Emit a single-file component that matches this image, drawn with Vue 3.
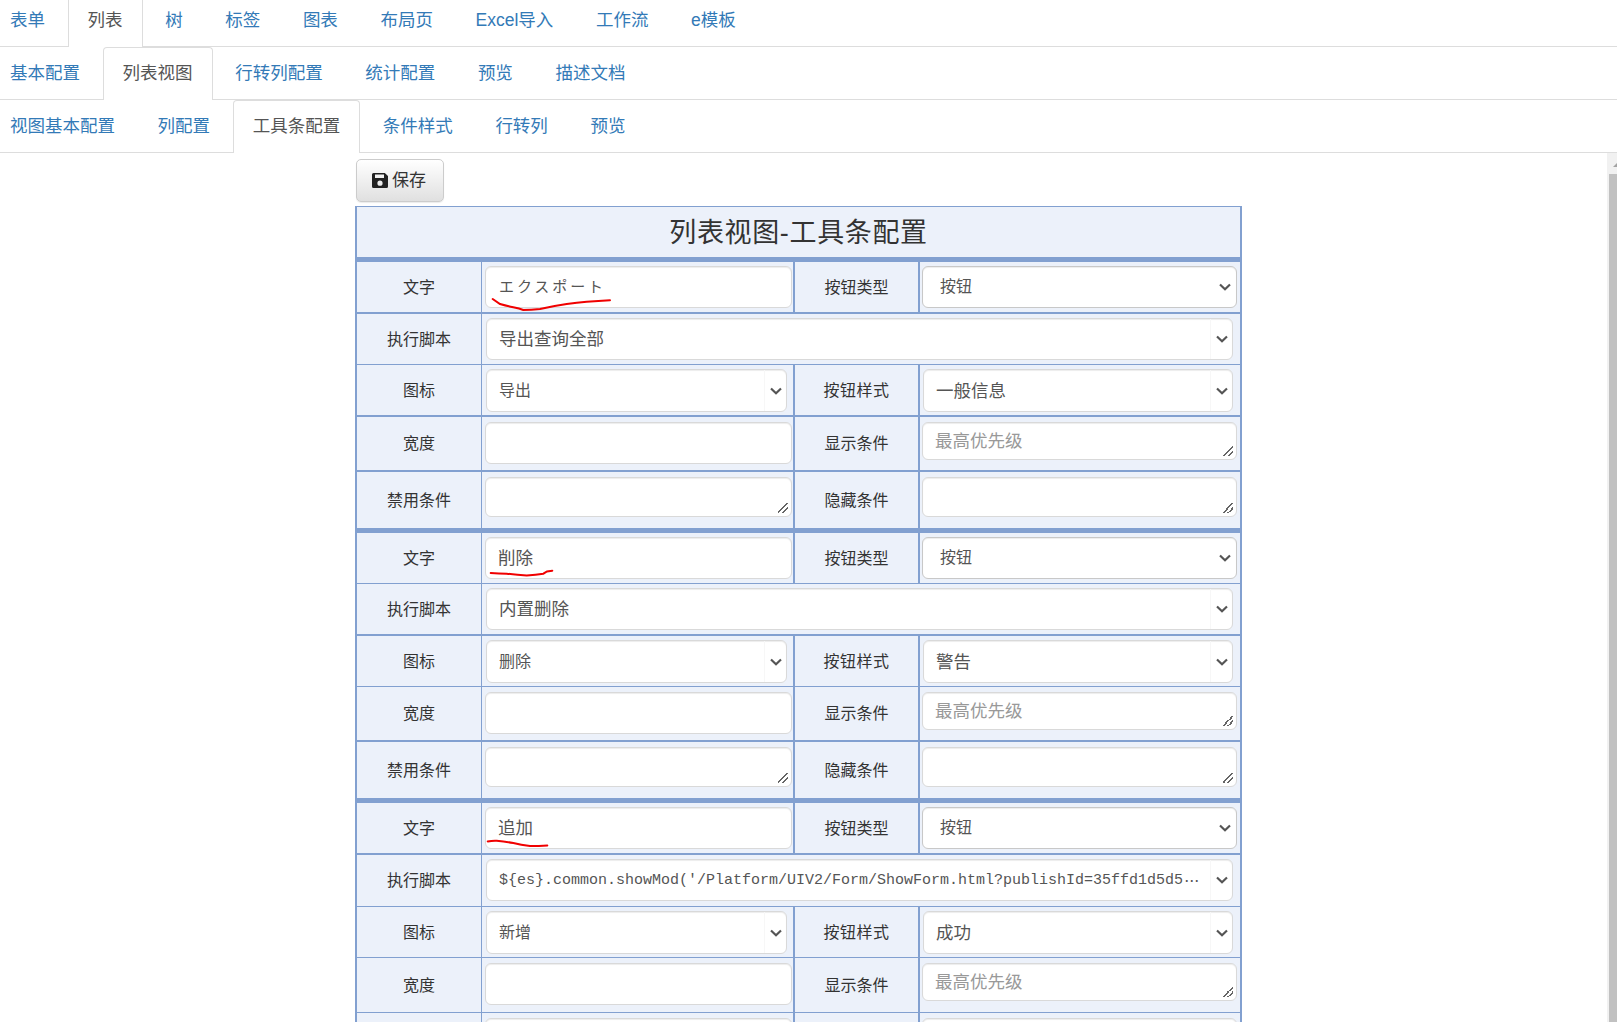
<script setup>
const navs = [
  { cls: 'first', items: ['表单', '列表', '树', '标签', '图表', '布局页', 'Excel导入', '工作流', 'e模板'], active: 1 },
  { cls: '', items: ['基本配置', '列表视图', '行转列配置', '统计配置', '预览', '描述文档'], active: 1 },
  { cls: '', items: ['视图基本配置', '列配置', '工具条配置', '条件样式', '行转列', '预览'], active: 2 }
]

const marks = {
  a: 'M7.7 33 L15 38 Q22 40 28.3 41.3 T38.3 44 Q46 44 55 43 Q68 40 81.7 38 Q92 36.5 101.7 35.7 L125 34.3',
  b: 'M5.7 36 Q14 36.5 21.7 36.7 Q32 38 41.7 38.4 Q51 38 58.3 36.7 L62 34.5 L67.3 33.7',
  c: 'M2.7 34.4 Q7 33.5 11.7 33.7 Q20 34.5 28.3 36 Q36 38 45 39 Q54 39 62.3 38.4'
}

const sections = [
  {
    text: 'エクスポート', textCls: 'kana', mark: 'a', script: '导出查询全部', icon: '导出', style: '一般信息',
    heights: [52, 51, 52, 55, 61], borders: ['b2', 'b1', 'b2', 'b2', 'b5'], last: false
  },
  {
    text: '削除', textCls: 'tight', mark: 'b', script: '内置删除', icon: '删除', style: '警告',
    heights: [51, 52, 51, 55, 61], borders: ['b1', 'b2', 'b1', 'b2', 'b5'], last: false
  },
  {
    text: '追加', textCls: 'tight', mark: 'c',
    longScript: '${es}.common.showMod(\'/Platform/UIV2/Form/ShowForm.html?publishId=35ffd1d5d5',
    icon: '新增', style: '成功',
    heights: [52, 52, 51, 55, 61], borders: ['b2', 'b1', 'b1', 'b1', 'b1'], last: true
  }
]
</script>

<template>
  <div class="page">
    <div
      v-for="(nav, n) in navs"
      :key="n"
      class="nav"
      :class="nav.cls"
    >
      <a
        v-for="(item, i) in nav.items"
        :key="item"
        class="tab"
        :class="{ active: i === nav.active }"
      >{{ item }}</a>
    </div>

    <div class="body">
      <main class="main">
        <button class="save" type="button">
          <svg class="disk" width="16" height="15" viewBox="0 0 16 15">
            <path
              fill="#222"
              fill-rule="evenodd"
              d="M1.5 0 H12.8 L16 3 V13.5 Q16 15 14.5 15 H1.5 Q0 15 0 13.5 V1.5 Q0 0 1.5 0 Z M3 1.5 V5 H12 V1.5 Z M8 7.6 A2.6 2.6 0 1 0 8 12.8 A2.6 2.6 0 1 0 8 7.6 Z"
            />
          </svg>
          <span class="save-text">保存</span>
        </button>

        <table class="grid">
          <colgroup>
            <col class="c1" />
            <col class="c2" />
            <col class="c3" />
            <col class="c4" />
          </colgroup>
          <tbody>
            <tr class="title-row">
              <td colspan="4" class="title">列表视图-工具条配置</td>
            </tr>
            <template v-for="(s, si) in sections" :key="si">
              <tr :class="s.borders[0]" :style="{ height: s.heights[0] + 'px' }">
                <th>文字</th>
                <td class="f pt4">
                  <div class="mark-wrap">
                    <input class="ctl text" :class="s.textCls" type="text" :value="s.text" />
                    <svg class="mark" width="130" height="48" viewBox="0 0 130 48">
                      <path :d="marks[s.mark]" fill="none" stroke="#f00000" stroke-width="2" stroke-linecap="round" />
                    </svg>
                  </div>
                </td>
                <th class="r">按钮类型</th>
                <td class="f pt4">
                  <div class="sel type">
                    <select class="ctl"><option>按钮</option></select>
                    <span class="arrow plain">
                      <svg width="12" height="8" viewBox="0 0 12 8"><path d="M1 1.5 L6 6.2 L11 1.5" fill="none" stroke="#555" stroke-width="2.2" /></svg>
                    </span>
                  </div>
                </td>
              </tr>
              <tr :class="s.borders[1]" :style="{ height: s.heights[1] + 'px' }">
                <th>执行脚本</th>
                <td colspan="3" class="f pt4 last-cell">
                  <div class="sel wide">
                    <div v-if="s.longScript" class="ctl long"><span>{{ s.longScript }}</span><span class="dots">⋯</span></div>
                    <select v-else class="ctl roomy"><option>{{ s.script }}</option></select>
                    <span class="arrow">
                      <svg width="12" height="8" viewBox="0 0 12 8"><path d="M1 1.5 L6 6.2 L11 1.5" fill="none" stroke="#555" stroke-width="2.2" /></svg>
                    </span>
                  </div>
                </td>
              </tr>
              <tr :class="s.borders[2]" :style="{ height: s.heights[2] + 'px' }">
                <th>图标</th>
                <td class="f pt4">
                  <div class="sel icon">
                    <select class="ctl"><option>{{ s.icon }}</option></select>
                    <span class="arrow">
                      <svg width="12" height="8" viewBox="0 0 12 8"><path d="M1 1.5 L6 6.2 L11 1.5" fill="none" stroke="#555" stroke-width="2.2" /></svg>
                    </span>
                  </div>
                </td>
                <th class="r spaced">按钮样式</th>
                <td class="f pt4">
                  <div class="sel btn-style">
                    <select class="ctl roomy"><option>{{ s.style }}</option></select>
                    <span class="arrow">
                      <svg width="12" height="8" viewBox="0 0 12 8"><path d="M1 1.5 L6 6.2 L11 1.5" fill="none" stroke="#555" stroke-width="2.2" /></svg>
                    </span>
                  </div>
                </td>
              </tr>
              <tr :class="s.borders[3]" :style="{ height: s.heights[3] + 'px' }">
                <th>宽度</th>
                <td class="f pt5"><input class="ctl text" type="text" /></td>
                <th class="r">显示条件</th>
                <td class="f pt5"><textarea class="ctl area right cond" placeholder="最高优先级"></textarea></td>
              </tr>
              <tr :class="s.borders[4]" :style="{ height: s.heights[4] + 'px' }">
                <th>{{ s.last ? '' : '禁用条件' }}</th>
                <td class="f pt5"><textarea class="ctl area left"></textarea></td>
                <th class="r">{{ s.last ? '' : '隐藏条件' }}</th>
                <td class="f pt5"><textarea class="ctl area right"></textarea></td>
              </tr>
            </template>
          </tbody>
        </table>
      </main>

      <div class="scrollbar">
        <span class="up"></span>
        <span class="thumb"></span>
      </div>
    </div>
  </div>
</template>

<style>
html,
body {
  margin: 0;
  height: 1022px;
  overflow: hidden;
  background: #fff;
}
</style>

<style scoped>
.page {
  width: 1617px;
  height: 1022px;
  overflow: hidden;
  display: flex;
  flex-direction: column;
  font-family: "Liberation Sans", "Noto Sans CJK SC", sans-serif;
  color: #333;
}

.nav {
  flex: none;
  height: 53px;
  box-sizing: border-box;
  display: flex;
  padding-left: 0;
  border-bottom: 1px solid #ddd;
}
.nav.first {
  margin-top: -6px;
}
.tab {
  box-sizing: border-box;
  height: 53px;
  padding: 0 19px;
  margin-right: 2.6px;
  border: 1px solid transparent;
  border-bottom: none;
  border-radius: 4px 4px 0 0;
  font-size: 17.5px;
  line-height: 51px;
  color: #337ab7;
  white-space: nowrap;
}
.tab:first-child {
  margin-left: -10px;
}
.tab.active {
  border-color: #ddd;
  background: #fff;
  color: #555;
}

.body {
  flex: 1;
  min-height: 0;
  display: flex;
}
.main {
  flex: 1;
  min-width: 0;
  overflow: hidden;
  padding: 6px 0 0 355px;
}
.scrollbar {
  flex: none;
  width: 10px;
  position: relative;
  background: #f1f1f1;
  overflow: hidden;
}
.up {
  position: absolute;
  left: 6px;
  top: 9px;
  width: 0;
  height: 0;
  border-left: 5px solid transparent;
  border-right: 5px solid transparent;
  border-bottom: 5px solid #a3a3a3;
}
.thumb {
  position: absolute;
  left: 2px;
  right: 0;
  top: 21px;
  bottom: 0;
  background: #c1c1c1;
}

.save {
  display: flex;
  align-items: center;
  gap: 4px;
  box-sizing: border-box;
  width: 88px;
  height: 43px;
  margin: 0 0 4px 1px;
  padding: 0 0 1px 15px;
  border: 1px solid #ccc;
  border-radius: 5px;
  background: linear-gradient(#fff, #e0e0e0);
  box-shadow: 0 1px 1px rgba(0, 0, 0, 0.08);
  font-family: inherit;
  font-size: 17px;
  color: #333;
}
.save-text {
  margin-bottom: 4px;
}
.disk {
  flex: none;
}

.grid {
  box-sizing: border-box;
  width: 887px;
  table-layout: fixed;
  border-collapse: separate;
  border-spacing: 0;
  border-top: 1px solid #82a0d0;
  border-left: 2px solid #82a0d0;
  border-right: 2px solid #82a0d0;
  background: #ecf1fa;
}
.c1,
.c3 {
  width: 125px;
}
.c2 {
  width: 313px;
}
.c4 {
  width: 320px;
}
.title-row {
  height: 55px;
}
.title {
  padding: 0 0 4px;
  border-bottom: 5px solid #82a0d0;
  text-align: center;
  font-size: 27px;
  letter-spacing: 0.65px;
  color: #333;
}
th,
td {
  box-sizing: border-box;
  padding: 0;
}
th {
  padding-bottom: 3px;
  font-weight: 400;
  font-size: 16px;
  color: #333;
  text-align: center;
  border-right: 1px solid #82a0d0;
  border-bottom: 1px solid #82a0d0;
}
th.r {
  border-right: 2px solid #82a0d0;
}
th.spaced {
  letter-spacing: 0.5px;
}
.f {
  vertical-align: top;
  border-bottom: 1px solid #82a0d0;
}
.f:not(:last-child) {
  border-right: 2px solid #82a0d0;
}
.pt4 {
  padding-top: 4px;
}
.pt5 {
  padding-top: 5px;
}
.b2 > th,
.b2 > td {
  border-bottom-width: 2px;
}
.b5 > th,
.b5 > td {
  border-bottom-width: 5px;
}

.ctl {
  box-sizing: border-box;
  display: block;
  border: 1px solid #d9d9d9;
  border-radius: 6px;
  background: #fff;
  box-shadow: inset 0 1px 1px rgba(0, 0, 0, 0.075);
  font-family: "Liberation Sans", "Noto Sans CJK SC", sans-serif;
  font-size: 16px;
  color: #555;
  outline: none;
}
.text {
  width: 307px;
  height: 42px;
  margin-left: 3px;
  padding: 0 13px 3px;
}
.text.tight {
  padding: 0 12px 3px;
  font-size: 17.5px;
}
.text.kana {
  font-family: "Noto Sans CJK JP", sans-serif;
  font-size: 15px;
  letter-spacing: 2.9px;
}
.mark-wrap {
  position: relative;
}
.mark {
  position: absolute;
  left: 3px;
  top: 0;
  overflow: visible;
  pointer-events: none;
}

.area {
  height: 40px;
  padding: 6px 12px 4px;
  font-size: 17.5px;
  line-height: 25px;
}
.area::placeholder {
  color: #999;
}
.area::-webkit-resizer {
  background: linear-gradient(
      135deg,
      transparent 0 45%,
      #666 45% 55%,
      transparent 55% 70%,
      #666 70% 80%,
      transparent 80%
    )
    no-repeat right 3px bottom 3px / 10px 10px;
}
.area.left {
  width: 307px;
  margin-left: 3px;
}
.area.right {
  width: 315px;
  margin-left: 2px;
}
.area.cond {
  height: 38px;
}

.sel {
  position: relative;
  height: 42px;
}
.sel select {
  appearance: none;
  width: 100%;
  height: 100%;
  padding: 0 24px 0 12px;
  border-radius: 6px;
}
.sel select.roomy {
  font-size: 17.5px;
}
.long {
  display: flex;
  align-items: center;
  height: 100%;
  padding-left: 12px;
  font-family: "Liberation Mono", "Noto Sans CJK SC", monospace;
  font-size: 15px;
  white-space: nowrap;
  overflow: hidden;
}
.dots {
  margin-left: 1px;
  font-family: "Noto Sans CJK SC", sans-serif;
}
.sel.type {
  width: 315px;
  margin-left: 2px;
}
.sel.type select {
  padding: 0 24px 2px 17px;
  border-color: #c8c8c8;
}
.sel.wide {
  width: 747px;
  margin-left: 4px;
}
.sel.icon {
  width: 301px;
  height: 43px;
  margin-left: 4px;
}
.sel.btn-style {
  width: 310px;
  height: 43px;
  margin-left: 3px;
}
.arrow {
  position: absolute;
  right: 1px;
  top: 1px;
  bottom: 1px;
  width: 22px;
  box-sizing: border-box;
  display: flex;
  align-items: center;
  justify-content: center;
  border-left: 1px solid #f7f7f7;
  pointer-events: none;
}
.arrow.plain {
  border-left: none;
}
</style>
